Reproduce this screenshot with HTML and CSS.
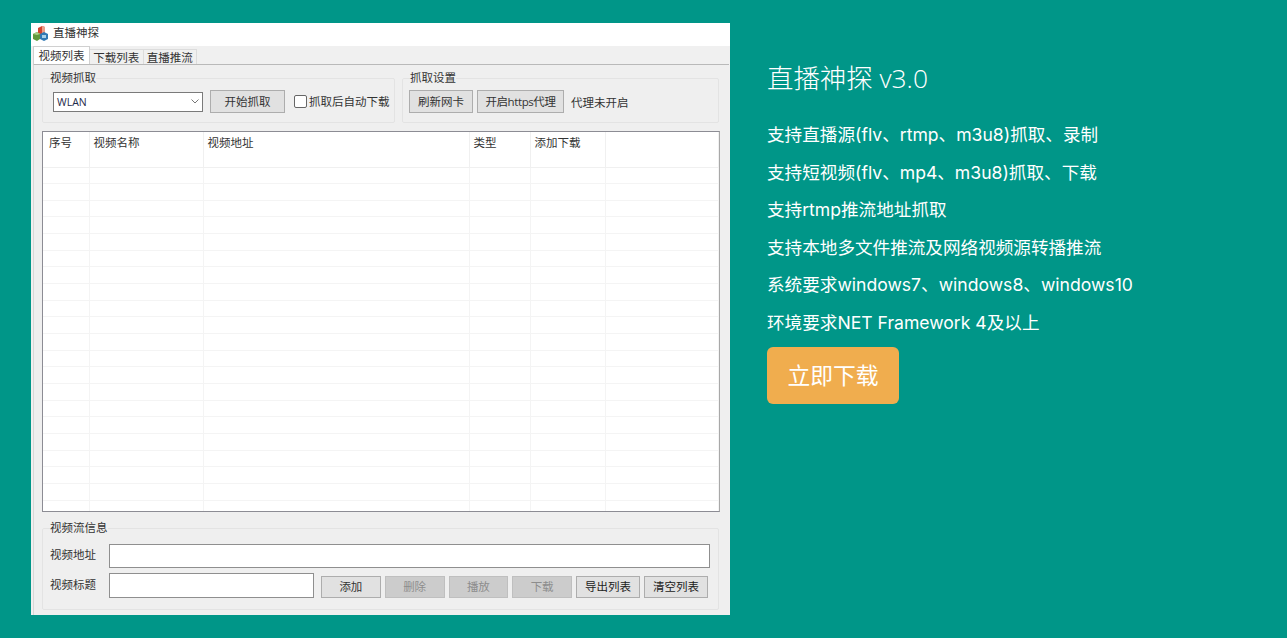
FILE: index.html
```html
<!DOCTYPE html>
<html lang="zh-CN">
  <head>
    <meta charset="UTF-8" />
    <title>直播神探</title>
    <link rel="stylesheet" href="styles.css">
  </head>
  <body>
    <div class="app">
      <div class="titlebar">
        <svg class="app-icon" width="16" height="16" viewBox="0 0 16 16">
          <path d="M5 3l4-2 3 1v6l-3 2-4-2z" fill="#d2452f" />
          <path d="M9 1l3 1v6l-3 2z" fill="#e9a08a" />
          <path d="M0 9l4-2 3 2v5l-3 2-4-2z" fill="#5f9a3c" />
          <path d="M0 9l4-2 3 2-3 1z" fill="#a9cf85" />
          <path d="M7 9l4-2 4 2v5l-4 2-4-2z" fill="#2f78b4" />
          <path d="M9 10h4v3h-4z" fill="#a8d0e8" />
        </svg>
        <span>直播神探</span>
      </div>
      <div class="tabs">
        <div class="tab active">视频列表</div>
        <div class="tab">下载列表</div>
        <div class="tab">直播推流</div>
      </div>
      <div class="panel">
        <div class="top-groups">
          <fieldset class="group capture">
            <legend>视频抓取</legend>
            <div class="group-row">
              <div class="combo">
                <span class="combo-value">WLAN</span>
                <svg width="8" height="5" viewBox="0 0 8 5"><path d="M.5.5L4 4 7.500.5" fill="none" stroke="#777" /></svg>
              </div>
              <button class="btn start">开始抓取</button>
              <label class="check"><input type="checkbox" />抓取后自动下载</label>
            </div>
          </fieldset>
          <fieldset class="group settings">
            <legend>抓取设置</legend>
            <div class="group-row">
              <button class="btn refresh">刷新网卡</button>
              <button class="btn proxy">开启https代理</button>
              <span class="proxy-state">代理未开启</span>
            </div>
          </fieldset>
        </div>
        <div class="list">
          <table>
            <thead>
              <tr><th>序号</th><th>视频名称</th><th>视频地址</th><th>类型</th><th>添加下载</th><th></th></tr>
            </thead>
            <tbody>
              <tr><td></td><td></td><td></td><td></td><td></td><td></td></tr>
              <tr><td></td><td></td><td></td><td></td><td></td><td></td></tr>
              <tr><td></td><td></td><td></td><td></td><td></td><td></td></tr>
              <tr><td></td><td></td><td></td><td></td><td></td><td></td></tr>
              <tr><td></td><td></td><td></td><td></td><td></td><td></td></tr>
              <tr><td></td><td></td><td></td><td></td><td></td><td></td></tr>
              <tr><td></td><td></td><td></td><td></td><td></td><td></td></tr>
              <tr><td></td><td></td><td></td><td></td><td></td><td></td></tr>
              <tr><td></td><td></td><td></td><td></td><td></td><td></td></tr>
              <tr><td></td><td></td><td></td><td></td><td></td><td></td></tr>
              <tr><td></td><td></td><td></td><td></td><td></td><td></td></tr>
              <tr><td></td><td></td><td></td><td></td><td></td><td></td></tr>
              <tr><td></td><td></td><td></td><td></td><td></td><td></td></tr>
              <tr><td></td><td></td><td></td><td></td><td></td><td></td></tr>
              <tr><td></td><td></td><td></td><td></td><td></td><td></td></tr>
              <tr><td></td><td></td><td></td><td></td><td></td><td></td></tr>
              <tr><td></td><td></td><td></td><td></td><td></td><td></td></tr>
              <tr><td></td><td></td><td></td><td></td><td></td><td></td></tr>
              <tr><td></td><td></td><td></td><td></td><td></td><td></td></tr>
              <tr><td></td><td></td><td></td><td></td><td></td><td></td></tr>
              <tr><td></td><td></td><td></td><td></td><td></td><td></td></tr>
            </tbody>
          </table>
        </div>
        <fieldset class="group stream">
          <legend>视频流信息</legend>
          <div class="url-row">
            <span class="field-label">视频地址</span>
            <input class="field url" type="text" />
          </div>
          <div class="title-row">
            <span class="field-label">视频标题</span>
            <input class="field title" type="text" />
            <div class="actions">
              <button class="btn wide">添加</button>
              <button class="btn wide off">删除</button>
              <button class="btn wide off">播放</button>
              <button class="btn wide off">下载</button>
              <button class="btn list-btn">导出列表</button>
              <button class="btn list-btn">清空列表</button>
            </div>
          </div>
        </fieldset>
      </div>
    </div>

    <div class="info">
      <h1>直播神探 v3.0</h1>
      <p>支持直播源(flv、rtmp、m3u8)抓取、录制</p>
      <p>支持短视频(flv、mp4、m3u8)抓取、下载</p>
      <p>支持rtmp推流地址抓取</p>
      <p>支持本地多文件推流及网络视频源转播推流</p>
      <p>系统要求windows7、windows8、windows10</p>
      <p>环境要求NET Framework 4及以上</p>
      <a href="#" class="download">立即下载</a>
    </div>
  </body>
</html>
```

FILE: styles.css
```css
html,
body {
  margin: 0;
  height: 100%;
  overflow: hidden;
}

body {
  display: flex;
  align-items: flex-start;
  gap: 37px;
  box-sizing: border-box;
  padding: 23px 0 0 31px;
  background-color: #009688;
  font-family: "Open Sans", "Noto Sans CJK SC", sans-serif;
}

/* Screenshot of the desktop program */
.app {
  width: 699px;
  height: 592px;
  flex: none;
  display: flex;
  flex-direction: column;
  background-color: #f0f0f0;
  color: #333;
  font-size: 11.5px;
  line-height: 14px;
}

.titlebar {
  height: 23px;
  display: flex;
  align-items: center;
  gap: 4px;
  padding: 0 0 4px 2px;
  box-sizing: border-box;
  background-color: #fff;
}

.tabs {
  height: 18px;
  display: flex;
  align-items: flex-end;
  padding-left: 2px;
  box-sizing: border-box;
}

.tab {
  width: 53.5px;
  height: 15px;
  padding-top: 1px;
  text-align: center;
  background-color: #f0f0f0;
  border: 1px solid #dcdcdc;
  border-bottom: none;
  border-left: none;
  box-sizing: border-box;
}

.tab.active {
  width: 57px;
  height: 18px;
  padding-top: 2px;
  background-color: #fff;
  border-color: #d0d0d0;
  border-left: 1px solid #d0d0d0;
}

.panel {
  flex: 1;
  border-top: 1px solid #b9b9b9;
  border-left: 1px solid #d8d8d8;
  margin-left: 2px;
  padding: 6px 9px 0 8px;
  margin-right: 1px;
  background-color: #efefef;
}

.top-groups {
  display: flex;
  gap: 7px;
}

.group {
  margin: 0;
  padding: 0;
  min-width: 0;
  border: 1px solid #e3e3e3;
  border-radius: 2px;
  box-sizing: border-box;
}

.group legend {
  margin-left: 7px;
  padding: 0;
}

.capture {
  width: 353px;
  height: 52px;
}

.settings {
  width: 317px;
  height: 52px;
}

.group-row {
  display: flex;
  align-items: center;
  padding-top: 5px;
}

.capture .group-row {
  padding-left: 10px;
}

.settings .group-row {
  padding-left: 6px;
}

.combo {
  width: 150px;
  height: 20px;
  display: flex;
  align-items: center;
  justify-content: space-between;
  padding: 0 3px;
  box-sizing: border-box;
  background-color: #fff;
  border: 1px solid #7a7a7a;
  color: #1e2a4a;
}

.combo-value {
  font-size: 10.5px;
}

.btn {
  height: 23px;
  padding: 0;
  font: inherit;
  color: #333;
  background-color: #e1e1e1;
  border: 1px solid #adadad;
  box-sizing: border-box;
}

.start {
  width: 75px;
  margin-left: 7px;
}

.check {
  display: flex;
  align-items: center;
  gap: 2px;
  margin-left: 9px;
}

.check input {
  appearance: none;
  width: 13px;
  height: 13px;
  margin: 0;
  background-color: #fff;
  border: 1px solid #666;
  border-radius: 2px;
}

.refresh {
  width: 64px;
}

.proxy {
  width: 87px;
  margin-left: 4px;
  letter-spacing: -0.4px;
}

.proxy-state {
  margin-left: 7px;
  padding-top: 2px;
}

.list {
  height: 381px;
  margin-top: 8px;
  overflow: hidden;
  background-color: #fff;
  border: 1px solid #8c8c94;
  border-right-color: #a8a8a8;
  box-sizing: border-box;
}

.list table {
  width: 100%;
  table-layout: fixed;
  border-collapse: collapse;
}

.list th {
  height: 35px;
  padding: 4px 0 0 4px;
  box-sizing: border-box;
  vertical-align: top;
  text-align: left;
  font-weight: normal;
  white-space: nowrap;
  border-right: 1px solid #f0f0f0;
  border-bottom: 1px solid #f0f0f0;
}

.list th:nth-child(1) { width: 46px; padding-left: 6px; }
.list th:nth-child(2) { width: 114px; }
.list th:nth-child(3) { width: 266px; }
.list th:nth-child(4) { width: 61px; }
.list th:nth-child(5) { width: 75px; }

.list td {
  height: 16.67px;
  padding: 0;
  box-sizing: border-box;
  border-right: 1px solid #f4f4f4;
  border-bottom: 1px solid #f4f4f4;
}

.stream {
  width: 677px;
  height: 89px;
  margin-top: 9px;
}

.url-row,
.title-row {
  display: flex;
  align-items: center;
}

.url-row {
  margin-top: 9px;
}

.title-row {
  margin-top: 5px;
}

.field-label {
  width: 66px;
  padding: 0 0 2px 7px;
  box-sizing: border-box;
  flex: none;
}

.field {
  height: 24px;
  padding: 0;
  background-color: #fff;
  border: 1px solid #8f8f8f;
  box-sizing: border-box;
}

.field.url {
  width: 601px;
}

.field.title {
  width: 205px;
  height: 25px;
}

.actions {
  display: flex;
  gap: 4px;
  margin: 3px 0 0 7px;
}

.actions .btn {
  height: 22px;
}

.actions .wide {
  width: 59.75px;
}

.actions .off {
  color: #8d8d8d;
  background-color: #cccccc;
  border-color: #bfbfbf;
}

.actions .list-btn {
  width: 64px;
  color: #222;
}

/* Right side text */
.info {
  color: #fff;
  font-family: Inter, "Noto Sans CJK SC", sans-serif;
  padding-top: 37px;
}

.info h1 {
  margin: 0 0 20px;
  font-family: "Open Sans", "Noto Sans CJK SC", sans-serif;
  font-size: 26.4px;
  line-height: 36px;
  font-weight: 300;
}

.info p {
  margin: 0;
  font-size: 17.6px;
  line-height: 37.5px;
}

.download {
  display: block;
  width: 132px;
  height: 57px;
  margin-top: 6px;
  border-radius: 6px;
  background-color: #f0ad4e;
  color: #fff;
  font-size: 22.8px;
  line-height: 57px;
  text-align: center;
  text-decoration: none;
}
```
